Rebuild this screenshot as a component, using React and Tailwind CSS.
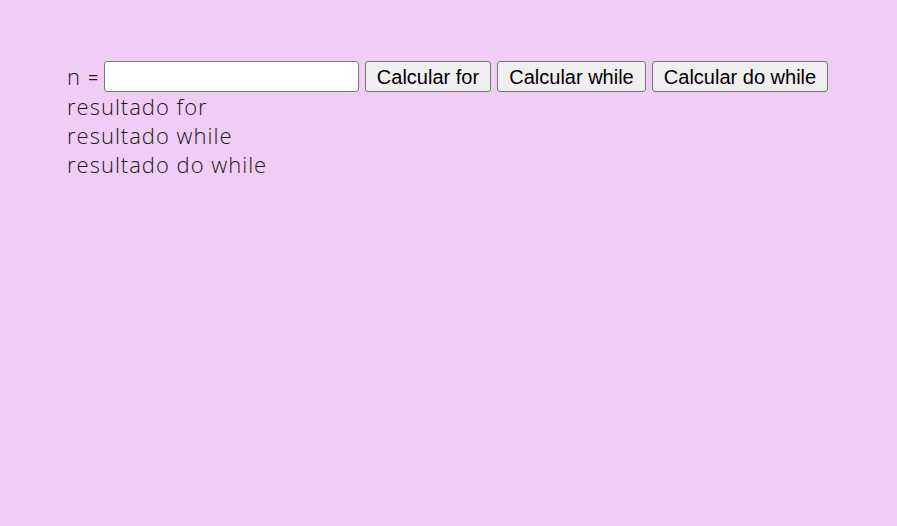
import React from 'react';

const App = () => {
  return (
    <div className="min-h-screen w-full bg-[#f0cdf4] pt-[61px] pl-[67px] font-['Open_Sans','Lato',sans-serif] font-light text-[22px] tracking-[1px] text-[#1a1a1a]">
      <div className="flex items-center h-[31px]">
        <span className="w-[37px] flex items-center gap-[7px] leading-none -mt-[2px]">
          <span>n</span>
          <span className="text-[18px] font-normal mt-[2px]">=</span>
        </span>
        <input
          type="text"
          className="w-[255px] h-[31px] bg-white border border-[#767676] rounded-[3px] px-1 text-[18px]"
        />
        <div className="flex gap-[6px] ml-[6px] font-['Liberation_Sans',Arial,sans-serif] font-normal tracking-normal text-[20px] text-black">
          <button className="h-[31px] w-[126px] bg-[#efefef] border border-[#767676] rounded-[3px] pb-[1px]">Calcular for</button>
          <button className="h-[31px] w-[149px] bg-[#efefef] border border-[#767676] rounded-[3px] pb-[1px]">Calcular while</button>
          <button className="h-[31px] w-[176px] bg-[#efefef] border border-[#767676] rounded-[3px] pb-[1px]">Calcular do while</button>
        </div>
      </div>
      <div className="leading-[29px]">
        <p>resultado for</p>
        <p>resultado while</p>
        <p>resultado do while</p>
      </div>
    </div>
  );
};

export default App;
